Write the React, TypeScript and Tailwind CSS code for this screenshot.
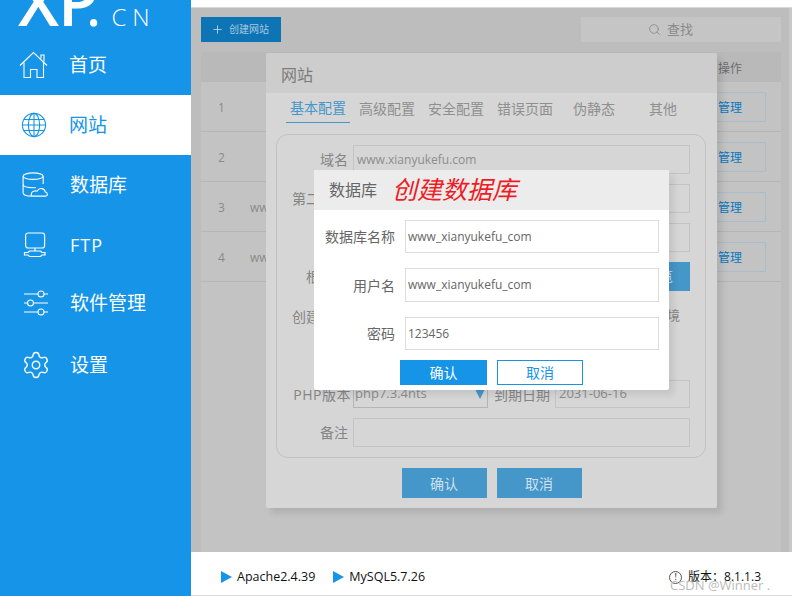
import React from 'react';
import { Plus, Search, Settings } from 'lucide-react';

const HomeIcon = () => (
  <svg width="30" height="28" viewBox="0 0 30 28" fill="none" stroke="currentColor" strokeWidth="1.1">
    <path d="M1 14.5 14.5 1.5 28 14.5" />
    <path d="M22 7.5V4h3v6.5" />
    <path d="M5 11.5V26.5H11.5V18.5H18V26.5H24.5V11.5" />
  </svg>
);

const GlobeIcon = () => (
  <svg width="26" height="26" viewBox="0 0 26 26" fill="none" stroke="currentColor" strokeWidth="1.1">
    <circle cx="13" cy="13" r="11.6" />
    <ellipse cx="13" cy="13" rx="5.6" ry="11.6" />
    <path d="M13 1.4V24.6M1.4 13H24.6M3 7.5H23M3 18.5H23" />
  </svg>
);

const DatabaseIcon = () => (
  <svg width="26" height="26" viewBox="0 0 28 28" fill="none" stroke="currentColor" strokeWidth="1.2">
    <ellipse cx="12" cy="4.5" rx="10.8" ry="3.5" />
    <path d="M1.2 4.5V22.5C1.2 24.5 5 25.8 10.5 26" />
    <path d="M22.8 4.5V13" />
    <path d="M1.2 13.5C1.5 15.5 5.5 17 12 17C13 17 14 17 14.8 16.8" />
    <path d="M11 26H25.5C28 26 28 21.8 25 21.5C24.7 17.5 18.5 16.2 16.5 20.5C13.5 19.8 10.5 21 10 23.5C9.7 24.8 10 26 11 26Z" />
  </svg>
);

const FtpIcon = () => (
  <svg width="24" height="26" viewBox="0 0 24 26" fill="none" stroke="currentColor" strokeWidth="1.2">
    <rect x="2.6" y="1" width="19" height="15" rx="2.5" />
    <path d="M12 16V19" />
    <path d="M6.5 19H17.5L19 20.5H22V23H19L17.5 24.5H6.5L5 23H1.5V20.5H5Z" />
  </svg>
);

const SlidersIcon = () => (
  <svg width="26" height="26" viewBox="0 0 26 26" fill="none" stroke="currentColor" strokeWidth="1.1">
    <path d="M1 4H15M21 4H25M1 13H4.5M10.5 13H25M1 22H15M21 22H25" />
    <circle cx="18" cy="4" r="3" />
    <circle cx="7.5" cy="13" r="3" />
    <circle cx="18" cy="22" r="3" />
  </svg>
);

const navItems = [
  { label: '首页', icon: <HomeIcon />, box: 'w-[69px] pl-[19px]' },
  { label: '网站', icon: <GlobeIcon />, box: 'w-[69px] pl-[21px]', active: true },
  { label: '数据库', icon: <DatabaseIcon />, box: 'w-[70px] pl-[22px]' },
  { label: 'FTP', icon: <FtpIcon />, box: 'w-[70px] pl-[23px]', spaced: true },
  { label: '软件管理', icon: <SlidersIcon />, box: 'w-[70px] pl-[23px]', lift: true },
  { label: '设置', icon: <Settings size={30} strokeWidth={1.1} />, box: 'w-[70px] pl-[21px]' },
];

const rows = [
  { id: 1, site: '' },
  { id: 2, site: '' },
  { id: 3, site: 'www.xianyukefu.com' },
  { id: 4, site: 'www.xianyukefu.com' },
];

const tabs = ['基本配置', '高级配置', '安全配置', '错误页面', '伪静态', '其他'];

const Field = ({ label, value }: { label: string; value?: string }) => (
  <div className="flex h-[29px] items-center">
    <span className="w-[76px] pr-[5px] text-right text-[14px] text-[#858585]">{label}</span>
    <div className="flex h-full flex-1 items-center border border-[#c4c4c4] pl-[3px] text-[12px] text-[#8d8d8d]">{value}</div>
  </div>
);

const DbField = ({ label, value, height }: { label: string; value: string; height: string }) => (
  <div className={`flex items-center ${height}`}>
    <span className="w-[81px] text-right text-[14px] text-[#666]">{label}</span>
    <div className="ml-[10px] flex h-full w-[254px] items-center border border-[#dcdcdc] pl-[2px] text-[12px] text-[#666]">{value}</div>
  </div>
);

export default function App() {
  return (
    <div className="flex h-[596px] w-[792px] overflow-hidden bg-white font-['Open_Sans','Noto_Sans_CJK_SC',sans-serif]">
      <aside className="w-[191px] shrink-0 overflow-hidden bg-[#1594e8] text-white">
        <div className="flex h-[35px] items-start overflow-hidden pl-[18px]">
          <div className="mt-[-33px] flex items-baseline">
            <span className="text-[66px] leading-[66px] font-semibold tracking-[-1px]">XP</span>
            <span className="ml-[-11px] text-[50px] leading-[66px] font-semibold">.</span>
            <span className="ml-[11px] text-[24px] font-light tracking-[6px]">CN</span>
          </div>
        </div>
        {navItems.map((item) => (
          <div
            key={item.label}
            className={`flex h-[60px] items-center ${item.lift ? 'pb-[4px]' : ''} ${item.active ? 'bg-white text-[#1594e8]' : ''}`}
          >
            <span className={`flex shrink-0 ${item.box}`}>{item.icon}</span>
            <span className={item.spaced ? 'text-[18px] tracking-[1px]' : 'text-[19px]'}>{item.label}</span>
          </div>
        ))}
      </aside>

      <main className="relative flex min-w-0 flex-1 flex-col bg-white">
        <div className="h-[8px] border-b border-[#d8d8d8] bg-white" />

        <div className="flex flex-1 bg-[#bdbdbd] pl-[10px]">
          <div className="flex flex-1 flex-col bg-[#c3c3c3]">
            <div className="flex h-[44px] items-end justify-between bg-[#bdbdbd] pb-[10px]">
              <button className="flex h-[25px] w-[80px] items-center bg-[#0d74b5] pl-[10px] text-[10px] text-[#a9c9de]">
                <Plus size={13} strokeWidth={1.4} className="mr-[5px] text-[#cfe0ec]" />
                创建网站
              </button>
              <div className="flex h-[25px] w-[200px] items-center bg-[#c5c5c5] pl-[67px] text-[13px] text-[#8a8a8a]">
                <Search size={13} strokeWidth={1.5} className="mr-[6px]" />
                查找
              </div>
            </div>
            <div className="flex h-[30px] items-center justify-end bg-[#b9b9b9] pt-[3px] pr-[39px] text-[12px] text-[#6e6e6e]">操作</div>
            {rows.map((row) => (
              <div key={row.id} className="flex h-[50px] items-center border-b border-[#b5b5b5] text-[12px] text-[#8a8a8a]">
                <span className="w-[49px] pt-[2px] pl-[17px]">{row.id}</span>
                <span className="pt-[2px]">{row.site}</span>
                <button className="mr-[15px] ml-auto flex h-[30px] w-[60px] items-center justify-end border border-[#a9bccb] pt-[2px] pr-[23px] text-[12px] text-[#0a78c0]">
                  管理
                </button>
              </div>
            ))}
          </div>
          <div className="w-[11px] border-r-[3px] border-[#c8c8c8]" />
        </div>

        <footer className="flex h-[44px] items-center border-b border-[#dcdcdc] pt-[7px] pr-[31px] pl-[30px] text-[12.5px] text-[#111]">
          <span className="mr-[5px] border-y-[6px] border-l-[11px] border-y-transparent border-l-[#1594e8]" />
          Apache2.4.39
          <span className="mr-[5px] ml-[18px] border-y-[6px] border-l-[11px] border-y-transparent border-l-[#1594e8]" />
          MySQL5.7.26
          <span className="ml-auto flex h-[13px] w-[13px] items-center justify-center rounded-full border border-[#555] text-[9px]">!</span>
          <span className="ml-[6px] text-[12px]">版本：8.1.1.3</span>
        </footer>
        <span className="absolute top-[576px] left-[479px] text-[13px] text-[#bbbbbb]">CSDN @Winner .</span>

        {/* website dialog, dimmed by the database dialog on top */}
        <div className="absolute top-[53px] left-[75px] flex h-[455px] w-[451px] flex-col rounded-[2px] bg-[#d6d6d6] shadow-[5px_5px_6px_rgba(0,0,0,0.1)]">
          <div className="flex h-[40px] items-center rounded-t-[2px] bg-[#cdcdcd] pt-[3px] pl-[15px] text-[16px] text-[#7c7c7c]">网站</div>
          <div className="flex h-[30px] gap-[5px] pl-[20px]">
            {tabs.map((tab, i) => (
              <div
                key={tab}
                className={`flex w-[64px] items-center justify-center text-[14px] ${i === 0 ? 'border-b border-[#4596c9] text-[#4596c9]' : 'text-[#8f8f8f]'}`}
              >
                {tab}
              </div>
            ))}
          </div>
          <div className="mt-[11px] mr-[11px] ml-[10px] flex h-[324px] flex-col gap-[10px] rounded-[12px] border border-[#c2c2c2] pt-[10px] pr-[15px]">
            <Field label="域名" value="www.xianyukefu.com" />
            <Field label="第二域名" />
            <Field label="" />
            <div className="flex h-[29px] items-center">
              <span className="w-[76px] pr-[5px] text-right text-[14px] text-[#858585]">根目录</span>
              <div className="h-full flex-1 border border-[#c4c4c4]" />
              <button className="h-full w-[60px] bg-[#4596c9] text-[13px] text-[#d3e3ee]">浏览</button>
            </div>
            <div className="flex h-[30px] items-center justify-between pr-[10px] text-[13px] text-[#858585]">
              <span className="w-[76px] pr-[5px] text-right text-[14px]">创建环境</span>
              <span>环境</span>
            </div>
            <div className="flex h-[30px] items-center">
              <span className="w-[76px] pr-[5px] text-right text-[14px] text-[#858585]">程序</span>
            </div>
            <div className="mt-[-1px] flex h-[28px] items-center">
              <span className="w-[76px] pr-[2px] text-right text-[14px] tracking-[0.5px] text-[#858585]">PHP版本</span>
              <div className="flex h-full w-[135px] items-center justify-between border border-[#b5b5b5] pr-[2px] pl-[1px] text-[13px] text-[#8d8d8d]">
                php7.3.4nts
                <span className="border-x-[5px] border-t-[10px] border-x-transparent border-t-[#4596c9]" />
              </div>
              <span className="w-[67px] pr-[5px] text-right text-[14px] text-[#858585]">到期日期</span>
              <div className="flex h-full flex-1 items-center border border-[#c4c4c4] pl-[3px] text-[13px] text-[#8d8d8d]">2031-06-16</div>
            </div>
            <Field label="备注" />
          </div>
          <div className="mt-[10px] flex justify-center gap-[10px]">
            <button className="h-[30px] w-[85px] bg-[#4596c9] text-[14px] text-[#cfe0ec]">确认</button>
            <button className="h-[30px] w-[85px] bg-[#4596c9] text-[14px] text-[#cfe0ec]">取消</button>
          </div>
        </div>

        {/* database dialog */}
        <div className="absolute top-[170px] left-[123px] flex h-[220px] w-[355px] flex-col rounded-[2px] bg-white shadow-[5px_5px_6px_rgba(0,0,0,0.08)]">
          <div className="flex h-[40px] items-center rounded-t-[2px] bg-[#ececec] pl-[15px]">
            <span className="text-[16px] text-[#666]">数据库</span>
            <span className="ml-[15px] text-[25px] text-[#ee1c25] italic">创建数据库</span>
          </div>
          <div className="mt-[10px] flex flex-col gap-[15px]">
            <DbField label="数据库名称" value="www_xianyukefu_com" height="h-[33px]" />
            <DbField label="用户名" value="www_xianyukefu_com" height="h-[34px]" />
            <DbField label="密码" value="123456" height="h-[33px]" />
          </div>
          <div className="mt-[10px] flex gap-[10px] pl-[86px]">
            <button className="h-[25px] w-[87px] bg-[#1594e8] text-[14px] text-white">确认</button>
            <button className="h-[25px] w-[86px] border border-[#1594e8] text-[14px] text-[#1594e8]">取消</button>
          </div>
        </div>
      </main>
    </div>
  );
}
